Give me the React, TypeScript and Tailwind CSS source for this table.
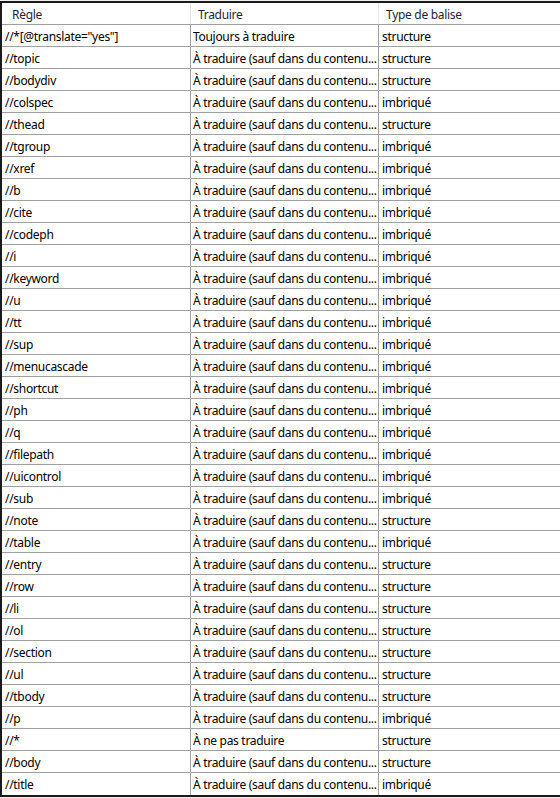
import React from "react";

const T = "À traduire (sauf dans du contenu...";
const rows: [string, string, string][] = [
  ['//*[@translate="yes"]', "Toujours à traduire", "structure"],
  ["//topic", T, "structure"],
  ["//bodydiv", T, "structure"],
  ["//colspec", T, "imbriqué"],
  ["//thead", T, "structure"],
  ["//tgroup", T, "imbriqué"],
  ["//xref", T, "imbriqué"],
  ["//b", T, "imbriqué"],
  ["//cite", T, "imbriqué"],
  ["//codeph", T, "imbriqué"],
  ["//i", T, "imbriqué"],
  ["//keyword", T, "imbriqué"],
  ["//u", T, "imbriqué"],
  ["//tt", T, "imbriqué"],
  ["//sup", T, "imbriqué"],
  ["//menucascade", T, "imbriqué"],
  ["//shortcut", T, "imbriqué"],
  ["//ph", T, "imbriqué"],
  ["//q", T, "imbriqué"],
  ["//filepath", T, "imbriqué"],
  ["//uicontrol", T, "imbriqué"],
  ["//sub", T, "imbriqué"],
  ["//note", T, "structure"],
  ["//table", T, "imbriqué"],
  ["//entry", T, "structure"],
  ["//row", T, "structure"],
  ["//li", T, "structure"],
  ["//ol", T, "structure"],
  ["//section", T, "structure"],
  ["//ul", T, "structure"],
  ["//tbody", T, "structure"],
  ["//p", T, "imbriqué"],
  ["//*", "À ne pas traduire", "structure"],
  ["//body", T, "structure"],
  ["//title", T, "imbriqué"],
];

export default function App() {
  return (
    <div
      className="w-[560px] h-[798px] bg-[#f0f0f0] overflow-hidden pt-[1px]"
      style={{ fontFamily: '"Noto Sans", "Open Sans", sans-serif' }}
    >
      <div className="w-[600px] bg-white border-l-2 border-t-2 border-b-2 border-[#1a1a1a] text-[12px] tracking-[-0.3px] text-black">
        <div className="flex h-[22px] border-b border-[#a0a0a0] text-[#1e1e3c]">
          <div className="w-[189px] shrink-0 border-r border-[#e5e5e5] pl-[10px] pt-[2px] flex items-center">Règle</div>
          <div className="w-[188px] shrink-0 border-r border-[#e5e5e5] pl-[7px] pt-[2px] flex items-center">Traduire</div>
          <div className="flex-1 pl-[7px] pt-[2px] flex items-center">Type de balise</div>
        </div>
        {rows.map((r, i) => (
          <div key={i} className="flex h-[22px] border-b border-[#a0a0a0] last:border-b-0">
            <div className="w-[189px] shrink-0 border-r border-[#a0a0a0] pl-[3px] pt-[2px] flex items-center whitespace-nowrap">{r[0]}</div>
            <div className="w-[188px] shrink-0 border-r border-[#a0a0a0] pl-[2px] pt-[2px] flex items-center whitespace-nowrap">{r[1]}</div>
            <div className="flex-1 pl-[3px] pt-[2px] flex items-center whitespace-nowrap">{r[2]}</div>
          </div>
        ))}
      </div>
    </div>
  );
}
